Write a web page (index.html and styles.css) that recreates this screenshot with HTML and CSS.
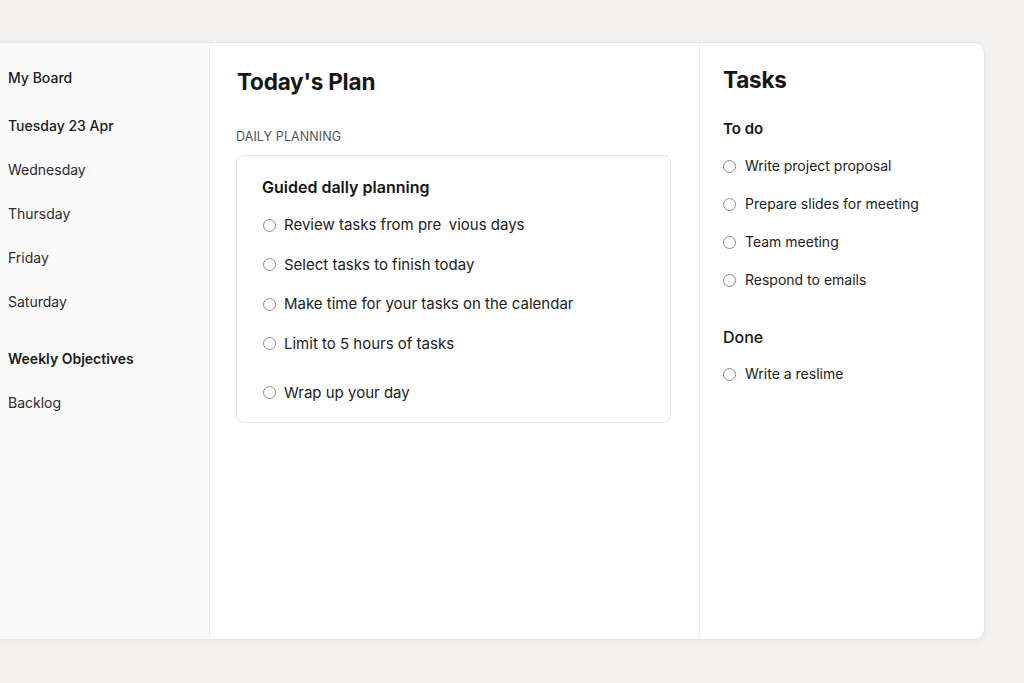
FILE: index.html
```html
<!DOCTYPE html>
<html>
<head>
<meta charset="utf-8">
<link rel="stylesheet" href="styles.css">
</head>
<body>
<div class="frame">
  <div class="board">
    <nav class="sidebar">
      <div class="nav-item strong first">My Board</div>
      <div class="nav-item strong today">Tuesday 23 Apr</div>
      <div class="nav-item">Wednesday</div>
      <div class="nav-item">Thursday</div>
      <div class="nav-item">Friday</div>
      <div class="nav-item">Saturday</div>
      <div class="nav-item bold weekly">Weekly Objectives</div>
      <div class="nav-item backlog">Backlog</div>
    </nav>
    <main class="main">
      <h1 class="title">Today's Plan</h1>
      <div class="label">DAILY PLANNING</div>
      <section class="plan-card">
        <h2 class="plan-title">Guided dally planning</h2>
        <ul class="plan-list">
          <li><span class="circle"></span>Review tasks from pre&ensp;vious days</li>
          <li><span class="circle"></span>Select tasks to finish today</li>
          <li><span class="circle"></span>Make time for your tasks on the calendar</li>
          <li><span class="circle"></span>Limit to 5 hours of tasks</li>
          <li class="last"><span class="circle"></span>Wrap up your day</li>
        </ul>
      </section>
    </main>
    <aside class="tasks">
      <h1 class="title">Tasks</h1>
      <h3 class="group">To do</h3>
      <ul class="task-list">
        <li><span class="circle"></span>Write project proposal</li>
        <li><span class="circle"></span>Prepare slides for meeting</li>
        <li><span class="circle"></span>Team meeting</li>
        <li><span class="circle"></span>Respond to emails</li>
      </ul>
      <h3 class="group done">Done</h3>
      <ul class="task-list">
        <li><span class="circle"></span>Write a reslime</li>
      </ul>
    </aside>
  </div>
</div>
</body>
</html>
```

FILE: styles.css
```css
* { box-sizing: border-box; }
html, body { margin: 0; padding: 0; }
body {
  background: #f3f2f0;
  font-family: Inter, "Liberation Sans", sans-serif;
  color: #1b1b1b;
  width: 1024px;
  height: 683px;
  overflow: hidden;
}
.frame { padding-top: 42px; }
.board {
  display: flex;
  width: 997px;
  height: 598px;
  margin-left: -12px;
  background: #ffffff;
  border: 1px solid #e6e5e3;
  border-radius: 0 11px 11px 0;
  box-shadow: 0 2px 6px rgba(0,0,0,0.05);
  overflow: hidden;
}
.sidebar {
  width: 221px;
  flex: none;
  background: #fafafa;
  border-right: 1px solid #ececec;
  padding: 25px 0 0 19px;
}
.nav-item {
  font-size: 14px;
  line-height: 20px;
  color: #2b2b2b;
  margin-top: 24px;
}
.nav-item.first { margin-top: 0; }
.nav-item.strong { font-weight: 500; color: #1b1b1b; }
.nav-item.today { margin-top: 28px; }
.nav-item.bold { font-weight: 600; color: #1b1b1b; }
.nav-item.weekly { margin-top: 37px; }
.nav-item.backlog { margin-top: 24px; }

.main {
  width: 490px;
  flex: none;
  border-right: 1px solid #ececec;
  padding: 24px 28px 0 26px;
}
.title {
  margin: 0;
  font-size: 22.5px;
  line-height: 30px;
  font-weight: 700;
  color: #161616;
  letter-spacing: -0.2px;
}
.main .title { padding-left: 1px; }
.label {
  margin-top: 32px;
  font-size: 12.5px;
  line-height: 16px;
  color: #555;
  letter-spacing: 0.1px;
}
.plan-card {
  margin-top: 10px;
  border: 1px solid #e4e4e4;
  border-radius: 8px;
  padding: 21px 20px 18px 25px;
}
.plan-title {
  margin: 0;
  font-size: 16px;
  line-height: 20px;
  font-weight: 600;
  color: #161616;
}
.plan-list, .task-list {
  list-style: none;
  margin: 0;
  padding: 0;
}
.plan-list { margin-top: 17px; }
.plan-list li {
  display: flex;
  align-items: center;
  gap: 8px;
  font-size: 15px;
  line-height: 22px;
  color: #222;
  margin-top: 17.5px;
}
.plan-list li:first-child { margin-top: 0; }
.plan-list li.last { margin-top: 27px; }
.circle {
  width: 13px;
  height: 13px;
  flex: none;
  border: 1px solid #8c8c8c;
  border-radius: 50%;
  margin-left: 1px;
}
.tasks {
  flex: 1;
  padding: 22px 20px 0 23px;
}
.group {
  margin: 24px 0 0;
  font-size: 15px;
  line-height: 20px;
  font-weight: 600;
  color: #161616;
}
.group.done { margin-top: 36px; font-weight: 500; font-size: 16px; }
.task-list { margin-top: 16px; }
.task-list li {
  display: flex;
  align-items: center;
  gap: 9px;
  font-size: 14px;
  line-height: 22px;
  color: #222;
  margin-top: 16px;
}
.task-list li:first-child { margin-top: 0; }
.task-list .circle { margin-left: 0; }
```
